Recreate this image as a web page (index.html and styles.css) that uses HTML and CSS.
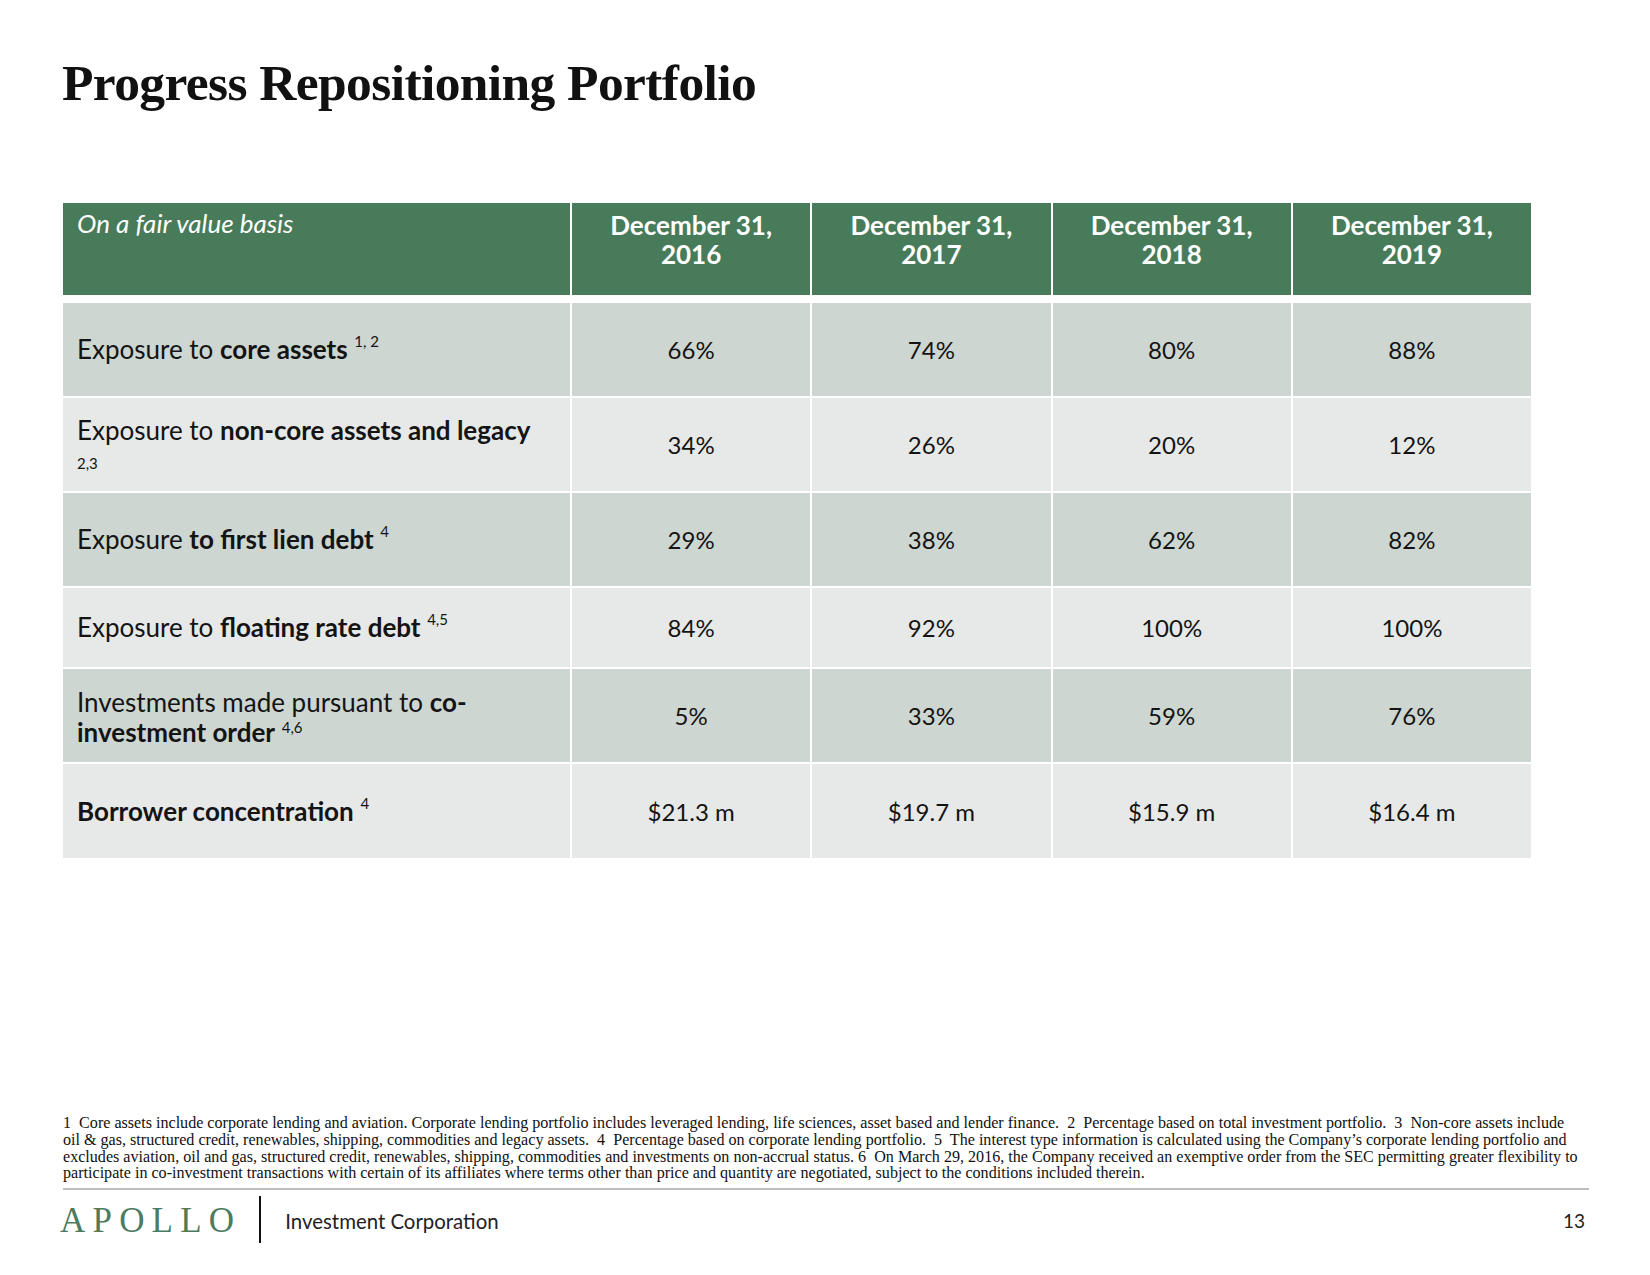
FILE: index.html
```html
<!DOCTYPE html>
<html lang="en">
<head>
<meta charset="utf-8">
<title>Progress Repositioning Portfolio</title>
<link rel="stylesheet" href="styles.css">
</head>
<body>
<div class="slide">
  <h1 class="title">Progress Repositioning Portfolio</h1>

  <div class="table">
    <div class="cell head label"><span><em>On a fair value basis</em></span></div>
    <div class="cell head"><span>December 31,<br>2016</span></div>
    <div class="cell head"><span>December 31,<br>2017</span></div>
    <div class="cell head"><span>December 31,<br>2018</span></div>
    <div class="cell head"><span>December 31,<br>2019</span></div>

    <div class="spacer"></div>

    <div class="cell dark label"><span>Exposure to <b>core assets</b> <sup>1, 2</sup></span></div>
    <div class="cell dark val"><span>66%</span></div>
    <div class="cell dark val"><span>74%</span></div>
    <div class="cell dark val"><span>80%</span></div>
    <div class="cell dark val"><span>88%</span></div>

    <div class="cell light label"><span>Exposure to <b>non-core assets and legacy</b><br><sup class="wrapsup">2,3</sup></span></div>
    <div class="cell light val"><span>34%</span></div>
    <div class="cell light val"><span>26%</span></div>
    <div class="cell light val"><span>20%</span></div>
    <div class="cell light val"><span>12%</span></div>

    <div class="cell dark label"><span>Exposure <b>to first lien debt</b> <sup>4</sup></span></div>
    <div class="cell dark val"><span>29%</span></div>
    <div class="cell dark val"><span>38%</span></div>
    <div class="cell dark val"><span>62%</span></div>
    <div class="cell dark val"><span>82%</span></div>

    <div class="cell light label"><span>Exposure to <b>floating rate debt</b> <sup>4,5</sup></span></div>
    <div class="cell light val"><span>84%</span></div>
    <div class="cell light val"><span>92%</span></div>
    <div class="cell light val"><span>100%</span></div>
    <div class="cell light val"><span>100%</span></div>

    <div class="cell dark label two"><span>Investments made pursuant to <b>co-</b><br><b>investment order</b> <sup class="low">4,6</sup></span></div>
    <div class="cell dark val"><span>5%</span></div>
    <div class="cell dark val"><span>33%</span></div>
    <div class="cell dark val"><span>59%</span></div>
    <div class="cell dark val"><span>76%</span></div>

    <div class="cell light label"><span><b>Borrower concentration</b> <sup>4</sup></span></div>
    <div class="cell light val"><span>$21.3 m</span></div>
    <div class="cell light val"><span>$19.7 m</span></div>
    <div class="cell light val"><span>$15.9 m</span></div>
    <div class="cell light val"><span>$16.4 m</span></div>
  </div>

  <div class="notes">
    <p>1&nbsp; Core assets include corporate lending and aviation. Corporate lending portfolio includes leveraged lending, life sciences, asset based and lender finance.&nbsp; 2&nbsp; Percentage based on total investment portfolio.&nbsp; 3&nbsp; Non-core assets include</p>
    <p>oil &amp; gas, structured credit, renewables, shipping, commodities and legacy assets.&nbsp; 4&nbsp; Percentage based on corporate lending portfolio.&nbsp; 5&nbsp; The interest type information is calculated using the Company’s corporate lending portfolio and</p>
    <p>excludes aviation, oil and gas, structured credit, renewables, shipping, commodities and investments on non-accrual status. 6&nbsp; On March 29, 2016, the Company received an exemptive order from the SEC permitting greater flexibility to</p>
    <p>participate in co-investment transactions with certain of its affiliates where terms other than price and quantity are negotiated, subject to the conditions included therein.</p>
  </div>

  <div class="rule"></div>

  <footer class="footer">
    <div class="brand">
      <span class="logo">APOLLO</span>
      <span class="bar"></span>
      <span class="corp">Investment Corporation</span>
    </div>
    <span class="page">13</span>
  </footer>
</div>
</body>
</html>
```

FILE: styles.css
```css
* { box-sizing: border-box; }

html, body {
  margin: 0;
  padding: 0;
  background: #ffffff;
}

.slide {
  width: 1650px;
  height: 1275px;
  padding: 0 0 0 63px;
  display: flex;
  flex-direction: column;
  color: #111;
}

.title {
  margin: 55px 0 0 -1px;
  font-family: "Liberation Serif", "Times New Roman", serif;
  font-weight: bold;
  font-size: 51.5px;
  line-height: 56px;
  letter-spacing: -0.6px;
  color: #111;
}

.table {
  margin-top: 92px;
  width: 1468px;
  display: grid;
  grid-template-columns: 507px repeat(4, 1fr);
  grid-template-rows: 92px 4px 93px 93px 93px 79px 93px 94px;
  column-gap: 2px;
  row-gap: 2px;
  font-family: Lato, "Noto Sans", sans-serif;
}

.spacer { grid-column: 1 / -1; }

.cell {
  display: flex;
  align-items: center;
  justify-content: center;
  font-size: 24px;
  line-height: 29px;
  color: #141414;
  text-align: center;
}

.cell.label {
  justify-content: flex-start;
  text-align: left;
  padding-left: 14px;
  font-size: 26px;
}

.cell.label.two {
  line-height: 30px;
  padding-top: 2px;
}

.head {
  background: #487b5a;
  color: #ffffff;
  font-weight: bold;
  font-size: 26px;
  align-items: flex-start;
  padding-top: 8px;
}

.head.label {
  font-weight: normal;
  padding-top: 6px;
}

.head em { font-style: italic; }

.dark { background: #ced6d2; }
.light { background: #e7e9e8; }

.cell b { font-weight: bold; }

.cell sup {
  font-size: 15px;
  line-height: 0;
  position: relative;
  top: -2px;
  vertical-align: super;
}

.cell sup.low {
  top: 1px;
}

.cell sup.wrapsup {
  vertical-align: baseline;
  top: 0;
  line-height: 18px;
}

.notes {
  margin-top: 257px;
  width: 1560px;
  font-family: "Liberation Serif", "Times New Roman", serif;
  font-size: 16.1px;
  line-height: 16.8px;
  color: #111;
}

.notes p {
  margin: 0;
  white-space: nowrap;
}

.rule {
  margin-top: 6px;
  width: 1526px;
  height: 2px;
  background: #bdbdbd;
}

.footer {
  width: 1522px;
  display: flex;
  align-items: center;
  justify-content: space-between;
  margin-top: 6px;
}

.brand {
  display: flex;
  align-items: center;
}

.logo {
  font-family: "Liberation Serif", "Times New Roman", serif;
  font-size: 35px;
  letter-spacing: 7.2px;
  color: #4d7b5f;
  margin-left: -3px;
  margin-top: 2px;
}

.bar {
  display: block;
  width: 2px;
  height: 47px;
  background: #111;
  margin-left: 18px;
}

.corp {
  font-family: Lato, "Liberation Sans", sans-serif;
  font-size: 20.4px;
  color: #222;
  margin-left: 24px;
  margin-top: 2px;
}

.page {
  font-family: Lato, "Liberation Sans", sans-serif;
  font-size: 19px;
  color: #222;
  margin-top: 2px;
}
```
